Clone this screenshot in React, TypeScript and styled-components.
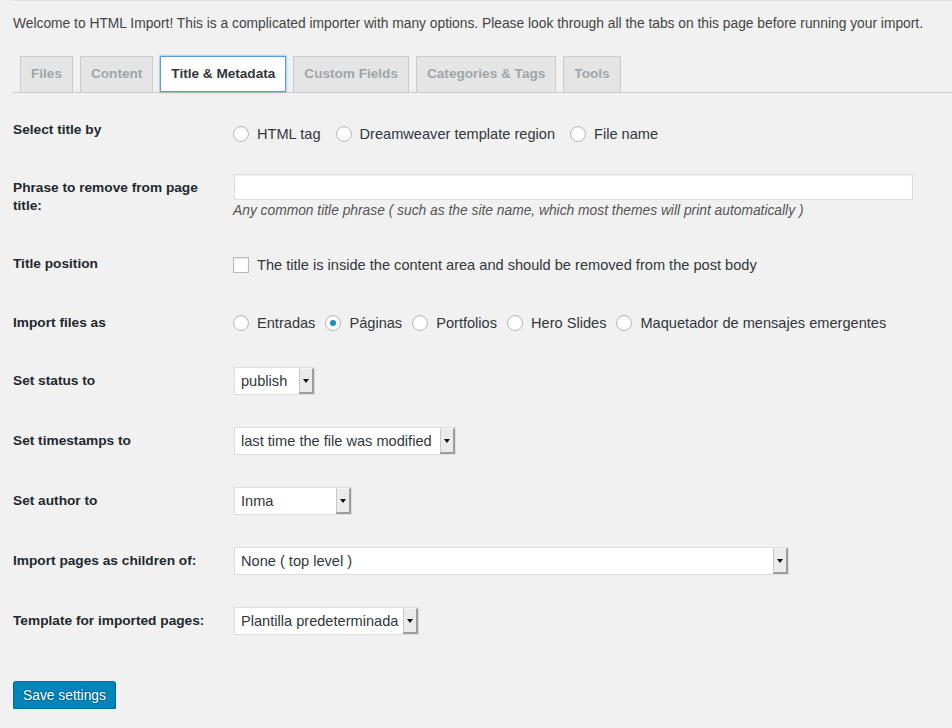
import styled, { createGlobalStyle } from 'styled-components';

const GlobalStyle = createGlobalStyle`
  body {
    margin: 0;
    background: #f1f1f1;
    font-family: "Liberation Sans", Arial, sans-serif;
    color: #444;
  }
`;

const Page = styled.div`
  margin-left: 13px;
  border-top: 1px solid #e2e2e2;
`;

const Intro = styled.p`
  margin: 13px 0 0;
  font-size: 13.8px;
  line-height: 20px;
  color: #444;
`;

const TabBar = styled.nav`
  display: flex;
  gap: 7px;
  margin-top: 22px;
  padding-left: 7px;
  border-bottom: 1px solid #ccc;
`;

const Tab = styled.a<{ $active?: boolean }>`
  box-sizing: border-box;
  height: 36px;
  padding: 5px 10px 0;
  line-height: 24px;
  font-size: 13.6px;
  font-weight: 700;
  text-decoration: none;
  cursor: pointer;
  border: 1px solid ${p => (p.$active ? '#5b9dd9' : '#ccc')};
  border-bottom: ${p => (p.$active ? '1px solid #5b9dd9' : 'none')};
  background: ${p => (p.$active ? '#fff' : '#e5e5e5')};
  color: ${p => (p.$active ? '#32373c' : '#a0a5aa')};
  box-shadow: ${p => (p.$active ? '0 0 2px rgba(30, 140, 190, 0.8)' : 'none')};
`;

const FormTable = styled.div`
  margin-top: 8px;
`;

const Row = styled.div`
  display: grid;
  grid-template-columns: 220px 1fr;
`;

const Label = styled.div`
  padding: 20px 10px 0 0;
  font-size: 13.7px;
  font-weight: 700;
  line-height: 18px;
  color: #23282d;
`;

const Field = styled.div<{ $pad?: string }>`
  padding: ${p => p.$pad ?? '15px 0 17px'};
  font-size: 14.6px;
  color: #32373c;
`;

const OptionGroup = styled.div<{ $gap: number }>`
  display: flex;
  align-items: center;
  gap: ${p => p.$gap}px;
  height: 26px;
`;

const Option = styled.label`
  display: inline-flex;
  align-items: center;
  gap: 8px;
  white-space: nowrap;
`;

const Radio = styled.span<{ $checked?: boolean }>`
  box-sizing: border-box;
  width: 16px;
  height: 16px;
  border: 1px solid #b4b9be;
  border-radius: 50%;
  background: #fff;
  box-shadow: inset 0 1px 2px rgba(0, 0, 0, 0.07);
  display: inline-flex;
  align-items: center;
  justify-content: center;

  &::after {
    content: '';
    display: ${p => (p.$checked ? 'block' : 'none')};
    width: 6px;
    height: 6px;
    border-radius: 50%;
    background: #1e8cbe;
  }
`;

const Checkbox = styled.span`
  box-sizing: border-box;
  width: 16px;
  height: 16px;
  border: 1px solid #b4b9be;
  background: #fff;
  box-shadow: inset 0 1px 2px rgba(0, 0, 0, 0.1);
`;

const TextInput = styled.input`
  box-sizing: border-box;
  display: block;
  width: 679px;
  height: 26px;
  margin-left: 1px;
  border: 1px solid #ddd;
  background: #fff;
  box-shadow: inset 0 1px 2px rgba(0, 0, 0, 0.07);
  outline: none;
`;

const Description = styled.p`
  margin: 2px 0 0;
  font-size: 13.8px;
  line-height: 18px;
  font-style: italic;
  color: #555;
`;

const SelectBox = styled.div<{ $w: number }>`
  box-sizing: border-box;
  display: flex;
  width: ${p => p.$w}px;
  height: 28px;
  margin-left: 1px;
  border: 1px solid #ddd;
  background: #fff;
`;

const SelectValue = styled.span`
  flex: 1;
  padding-left: 6px;
  line-height: 26px;
  color: #32373c;
  white-space: nowrap;
  overflow: hidden;
`;

const SelectArrow = styled.span`
  box-sizing: border-box;
  width: 15px;
  height: 26px;
  display: flex;
  align-items: center;
  justify-content: center;
  background: #ebebeb;
  border-left: 1px solid #c8c8c8;
  border-top: 1px solid #f4f4f4;
  border-right: 2px solid #9d9d9d;
  border-bottom: 2px solid #9d9d9d;

  &::after {
    content: '';
    border-left: 3px solid transparent;
    border-right: 3px solid transparent;
    border-top: 4px solid #111;
  }
`;

const SaveButton = styled.button`
  display: block;
  margin-top: 29px;
  height: 28px;
  width: 103px;
  padding: 0;
  font-family: inherit;
  font-size: 13.8px;
  color: #fff;
  background: #0085ba;
  border: 1px solid;
  border-color: #0073aa #006799 #006799;
  border-radius: 3px;
  box-shadow: 0 1px 0 #006799;
  text-shadow: 0 -1px 1px #006799, 1px 0 1px #006799, 0 1px 1px #006799, -1px 0 1px #006799;
  cursor: pointer;
`;

const tabs = ['Files', 'Content', 'Title & Metadata', 'Custom Fields', 'Categories & Tags', 'Tools'];

function Select({ value, width }: { value: string; width: number }) {
  return (
    <SelectBox $w={width}>
      <SelectValue>{value}</SelectValue>
      <SelectArrow />
    </SelectBox>
  );
}

function Radios({ options, checked, gap }: { options: string[]; checked?: string; gap: number }) {
  return (
    <OptionGroup $gap={gap}>
      {options.map(o => (
        <Option key={o}>
          <Radio $checked={o === checked} />
          {o}
        </Option>
      ))}
    </OptionGroup>
  );
}

export default function App() {
  return (
    <Page>
      <GlobalStyle />
      <Intro>
        Welcome to HTML Import! This is a complicated importer with many options. Please look through all the tabs on this page before running your import.
      </Intro>

      <TabBar>
        {tabs.map(t => (
          <Tab key={t} $active={t === 'Title & Metadata'}>{t}</Tab>
        ))}
      </TabBar>

      <FormTable>
        <Row>
          <Label>Select title by</Label>
          <Field $pad="20px 0 12px">
            <Radios gap={15} options={['HTML tag', 'Dreamweaver template region', 'File name']} />
          </Field>
        </Row>

        <Row>
          <Label>Phrase to remove from page title:</Label>
          <Field $pad="15px 0 15px">
            <TextInput type="text" />
            <Description>
              Any common title phrase ( such as the site name, which most themes will print automatically )
            </Description>
          </Field>
        </Row>

        <Row>
          <Label>Title position</Label>
          <Field $pad="17px 0 16px">
            <OptionGroup $gap={0}>
              <Option>
                <Checkbox />
                The title is inside the content area and should be removed from the post body
              </Option>
            </OptionGroup>
          </Field>
        </Row>

        <Row>
          <Label>Import files as</Label>
          <Field $pad="16px 0 16px">
            <Radios
              gap={10}
              checked="Páginas"
              options={['Entradas', 'Páginas', 'Portfolios', 'Hero Slides', 'Maquetador de mensajes emergentes']}
            />
          </Field>
        </Row>

        <Row>
          <Label>Set status to</Label>
          <Field>
            <Select value="publish" width={81} />
          </Field>
        </Row>

        <Row>
          <Label>Set timestamps to</Label>
          <Field>
            <Select value="last time the file was modified" width={222} />
          </Field>
        </Row>

        <Row>
          <Label>Set author to</Label>
          <Field>
            <Select value="Inma" width={118} />
          </Field>
        </Row>

        <Row>
          <Label>Import pages as children of:</Label>
          <Field>
            <Select value="None ( top level )" width={555} />
          </Field>
        </Row>

        <Row>
          <Label>Template for imported pages:</Label>
          <Field>
            <Select value="Plantilla predeterminada" width={185} />
          </Field>
        </Row>
      </FormTable>

      <SaveButton type="button">Save settings</SaveButton>
    </Page>
  );
}
